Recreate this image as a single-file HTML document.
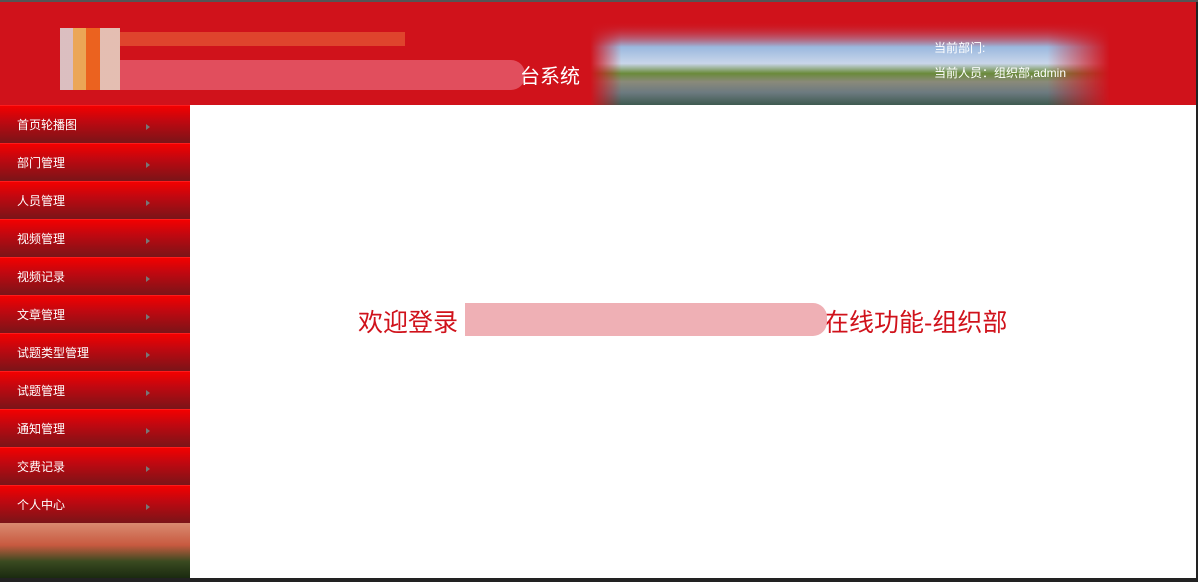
<!DOCTYPE html>
<html><head><meta charset="utf-8"><style>
*{margin:0;padding:0;box-sizing:border-box}
body{width:1198px;height:582px;position:relative;overflow:hidden;background:#fff;font-family:"Liberation Sans","Noto Sans CJK SC",sans-serif}
#top{position:absolute;left:0;top:0;width:1198px;height:2px;background:#555}
#hdr{position:absolute;left:0;top:2px;width:1198px;height:103px;background:#d0121b;overflow:hidden}
#scene{position:absolute;left:590px;top:20px;width:520px;height:83px;
background:linear-gradient(180deg,rgba(208,18,27,0) 0%,#9ab8de 30%,#c9d6ea 50%,#6a8a3a 62%,#8a8a7a 72%,#6c7a80 85%,#3f5a50 100%);
-webkit-mask-image:linear-gradient(90deg,transparent 0,#000 6%,#000 88%,transparent 100%);}
#scene2{position:absolute;left:590px;top:0;width:520px;height:45px;background:linear-gradient(180deg,#d0121b 40%,rgba(208,18,27,0) 100%)}
#logo{position:absolute;left:60px;top:26px;width:60px;height:62px;background:
linear-gradient(90deg,#ddd 0,#ddd 13px,#f0c060 13px,#f0c060 26px,#f07020 26px,#f07020 40px,#e8dccc 40px);opacity:.85}
#t1{position:absolute;left:120px;top:30px;width:285px;height:14px;background:#e04a30;opacity:.9}
#t2{position:absolute;left:120px;top:58px;width:405px;height:30px;background:#e25565;border-radius:0 14px 14px 0;opacity:.9}
#t2b{position:absolute;left:520px;top:58px;color:#fff;font-size:20px}
.info{position:absolute;left:934px;color:#fff;font-size:12px}
#side{position:absolute;left:0;top:105px;width:190px;height:473px}
.it{height:38px;border-top:1px solid #ff1b1b;background:linear-gradient(180deg,#f30000 0%,#c00810 40%,#7a1418 100%);color:#fff;font-size:12px;line-height:39px;padding-left:17px;position:relative}
.it:after{content:"";position:absolute;left:146px;top:18px;border-left:4px solid #777;border-top:3px solid transparent;border-bottom:3px solid transparent}
#pic{height:55px;background:linear-gradient(180deg,#d98a70 0%,#c85a40 40%,#3a4a20 70%,#1a2a10 100%)}
#main{position:absolute;left:190px;top:105px;width:1006px;height:473px;background:#fff}
#wel{position:absolute;left:358px;top:303px;font-size:25px;color:#d0121b;white-space:nowrap}
#blur{position:absolute;left:465px;top:303px;width:362px;height:33px;background:#efb0b5;border-radius:0 14px 14px 0}
#rb{position:absolute;right:0;top:2px;width:2px;height:580px;background:#222}
#bb{position:absolute;left:0;bottom:0;width:1198px;height:4px;background:#222}
</style></head><body>
<div id="top"></div>
<div id="hdr"><div id="scene"></div><div id="scene2"></div><div id="logo"></div><div id="t1"></div><div id="t2"></div><div id="t2b">台系统</div>
<div class="info" style="top:37px">当前部门:</div><div class="info" style="top:62px">当前人员：组织部,admin</div></div>
<div id="side">
<div class="it">首页轮播图</div><div class="it">部门管理</div><div class="it">人员管理</div><div class="it">视频管理</div><div class="it">视频记录</div><div class="it">文章管理</div><div class="it">试题类型管理</div><div class="it">试题管理</div><div class="it">通知管理</div><div class="it">交费记录</div><div class="it">个人中心</div>
<div id="pic"></div></div>
<div id="main"></div>
<div id="wel">欢迎登录<span style="display:inline-block;width:366px"></span>在线功能-组织部</div>
<div id="blur"></div>
<div id="rb"></div><div id="bb"></div>
</body></html>
